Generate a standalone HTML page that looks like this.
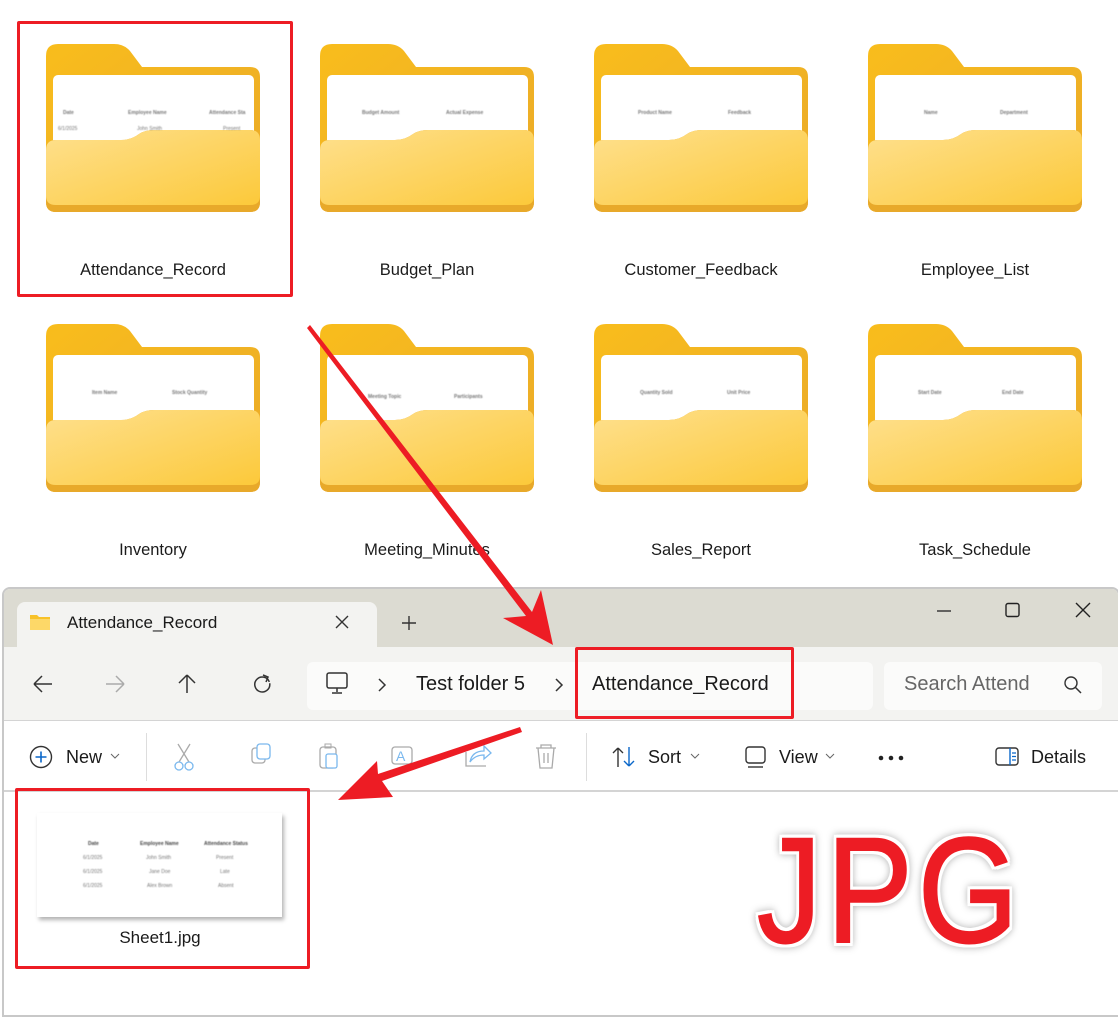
<!DOCTYPE html>
<html><head><meta charset="utf-8"><style>
*{margin:0;padding:0;box-sizing:border-box}
body{width:1118px;height:1006px;overflow:hidden;background:#fff;font-family:"Liberation Sans","DejaVu Sans",sans-serif;position:relative;color:#1a1a1a}
.abs{position:absolute}
.lbl{position:absolute;width:274px;text-align:center;font-size:16.5px;color:#1b1b1b}
.ft{position:absolute;font-size:5px;color:#777;filter:blur(0.4px)}
</style></head><body>
<svg width="0" height="0" style="position:absolute">
<defs>
<linearGradient id="gb" x1="0" y1="0" x2="1" y2="1"><stop offset="0" stop-color="#f9bd1c"/><stop offset="1" stop-color="#e9a92a"/></linearGradient>
<linearGradient id="gf" x1="0" y1="0" x2="1" y2="1"><stop offset="0" stop-color="#fee08e"/><stop offset="1" stop-color="#fcc93a"/></linearGradient>
<linearGradient id="gp" x1="0" y1="0" x2="0" y2="1"><stop offset="0.6" stop-color="#fff"/><stop offset="1" stop-color="#e8e8e8"/></linearGradient>
<symbol id="fold" viewBox="0 0 214 168">
<path d="M12 0 H68 Q78 0 84 7 L96 23 H204 Q214 23 214 33 V158 Q214 168 204 168 H10 Q0 168 0 158 V12 Q0 0 12 0Z" fill="url(#gb)"/>
<rect x="7" y="31" width="201" height="110" rx="5" fill="url(#gp)"/>
<path d="M0 106 Q0 96 10 96 H75 Q85 96 93 90 Q99 86 108 86 H204 Q214 86 214 96 V158 Q214 168 204 168 H10 Q0 168 0 158Z" fill="#e8a92a"/>
<path d="M0 106 Q0 96 10 96 H75 Q85 96 93 90 Q99 86 108 86 H204 Q214 86 214 96 V152 Q214 161 204 161 H10 Q0 161 0 152Z" fill="url(#gf)"/>
</symbol>
</defs></svg>

<svg class="abs" style="left:46px;top:44px" width="214" height="168"><use href="#fold"/></svg>
<svg class="abs" style="left:320px;top:44px" width="214" height="168"><use href="#fold"/></svg>
<svg class="abs" style="left:594px;top:44px" width="214" height="168"><use href="#fold"/></svg>
<svg class="abs" style="left:868px;top:44px" width="214" height="168"><use href="#fold"/></svg>
<svg class="abs" style="left:46px;top:324px" width="214" height="168"><use href="#fold"/></svg>
<svg class="abs" style="left:320px;top:324px" width="214" height="168"><use href="#fold"/></svg>
<svg class="abs" style="left:594px;top:324px" width="214" height="168"><use href="#fold"/></svg>
<svg class="abs" style="left:868px;top:324px" width="214" height="168"><use href="#fold"/></svg>
<div class="ft" style="left:63px;top:110px;font-weight:bold">Date</div>
<div class="ft" style="left:128px;top:110px;font-weight:bold">Employee Name</div>
<div class="ft" style="left:209px;top:110px;font-weight:bold">Attendance Sta</div>
<div class="ft" style="left:58px;top:126px">6/1/2025</div><div class="ft" style="left:137px;top:126px">John Smith</div><div class="ft" style="left:223px;top:126px">Present</div>
<div class="ft" style="left:362px;top:110px;font-weight:bold">Budget Amount</div><div class="ft" style="left:446px;top:110px;font-weight:bold">Actual Expense</div>
<div class="ft" style="left:638px;top:110px;font-weight:bold">Product Name</div><div class="ft" style="left:728px;top:110px;font-weight:bold">Feedback</div>
<div class="ft" style="left:924px;top:110px;font-weight:bold">Name</div><div class="ft" style="left:1000px;top:110px;font-weight:bold">Department</div>
<div class="ft" style="left:92px;top:390px;font-weight:bold">Item Name</div><div class="ft" style="left:172px;top:390px;font-weight:bold">Stock Quantity</div>
<div class="ft" style="left:368px;top:394px;font-weight:bold">Meeting Topic</div><div class="ft" style="left:454px;top:394px;font-weight:bold">Participants</div>
<div class="ft" style="left:640px;top:390px;font-weight:bold">Quantity Sold</div><div class="ft" style="left:727px;top:390px;font-weight:bold">Unit Price</div>
<div class="ft" style="left:918px;top:390px;font-weight:bold">Start Date</div><div class="ft" style="left:1002px;top:390px;font-weight:bold">End Date</div>

<div class="lbl" style="left:16px;top:261px">Attendance_Record</div>
<div class="lbl" style="left:290px;top:261px">Budget_Plan</div>
<div class="lbl" style="left:564px;top:261px">Customer_Feedback</div>
<div class="lbl" style="left:838px;top:261px">Employee_List</div>
<div class="lbl" style="left:16px;top:541px">Inventory</div>
<div class="lbl" style="left:290px;top:541px">Meeting_Minutes</div>
<div class="lbl" style="left:564px;top:541px">Sales_Report</div>
<div class="lbl" style="left:838px;top:541px">Task_Schedule</div>
<div class="abs" style="left:17px;top:21px;width:276px;height:276px;border:3px solid #ed1c24;border-radius:2px"></div>

<div class="abs" style="left:2px;top:587px;width:1118px;height:430px;border:2px solid #c8c8c8;border-radius:8px 8px 0 0;background:#fff;overflow:hidden">
 <div class="abs" style="left:0;top:0;width:1118px;height:58px;background:#dcdbd2"></div>
 <div class="abs" style="left:13px;top:13px;width:360px;height:47px;background:#f3f3f1;border-radius:8px 8px 0 0"></div>
 <div class="abs" style="left:0;top:58px;width:1118px;height:74px;background:#f3f3f1;border-bottom:1px solid #d4d4d4"></div>
 <div class="abs" style="left:303px;top:73px;width:566px;height:48px;background:#fbfbfa;border-radius:6px"></div>
 <div class="abs" style="left:880px;top:73px;width:218px;height:48px;background:#fbfbfa;border-radius:6px"></div>
 <div class="abs" style="left:0;top:201px;width:1118px;height:2px;background:#d4d4d4"></div>
</div>
<svg class="abs" style="left:29px;top:613px" width="22" height="18"><path d="M1 2 H8 L10 4 H21 V17 H1Z" fill="#f8c229"/><path d="M1 6 H21 V17 H1Z" fill="#fdd868"/></svg>
<div class="abs" style="left:67px;top:613px;font-size:17px">Attendance_Record</div>
<svg class="abs" style="left:335px;top:615px" width="14" height="14"><path d="M1 1L13 13M13 1L1 13" stroke="#333" stroke-width="1.4"/></svg>
<svg class="abs" style="left:401px;top:615px" width="16" height="16"><path d="M8 1V15M1 8H15" stroke="#333" stroke-width="1.4"/></svg>
<svg class="abs" style="left:935px;top:601px" width="160" height="20"><path d="M2 10H16" stroke="#222" stroke-width="1.3"/><rect x="71" y="2.5" width="13" height="13" rx="2" fill="none" stroke="#222" stroke-width="1.4"/><path d="M141 2L155 16M155 2L141 16" stroke="#222" stroke-width="1.4"/></svg>
<svg class="abs" style="left:32px;top:672px" width="250" height="24">
<path d="M2 12H20M2 12L10 4M2 12L10 20" stroke="#333" stroke-width="1.5" fill="none"/>
<path d="M74 12H92M92 12L84 4M92 12L84 20" stroke="#aaa" stroke-width="1.5" fill="none"/>
<path d="M155 3V21M155 3L147 11M155 3L163 11" stroke="#333" stroke-width="1.5" fill="none"/>
<path d="M235 5.5A7.5 7.5 0 1 0 236 6.5" stroke="#333" stroke-width="1.5" fill="none" transform="rotate(30 228 12)"/>
<path d="M231 3L236 5L234 10" stroke="#333" stroke-width="1.5" fill="none"/>
</svg>
<svg class="abs" style="left:325px;top:671px" width="24" height="24"><rect x="2" y="2" width="20" height="15" rx="2" fill="none" stroke="#333" stroke-width="1.5"/><path d="M12 17V21M7 22H17" stroke="#333" stroke-width="1.5"/></svg>
<svg class="abs" style="left:377px;top:678px" width="10" height="14"><path d="M2 1L8 7L2 13" stroke="#333" stroke-width="1.5" fill="none"/></svg>
<div class="abs" style="left:416px;top:673px;font-size:20px">Test folder 5</div>
<svg class="abs" style="left:554px;top:678px" width="10" height="14"><path d="M2 1L8 7L2 13" stroke="#333" stroke-width="1.5" fill="none"/></svg>
<div class="abs" style="left:592px;top:673px;font-size:20px">Attendance_Record</div>
<div class="abs" style="left:904px;top:673px;font-size:20px;color:#666">Search Attend</div>
<svg class="abs" style="left:1063px;top:675px" width="20" height="20"><circle cx="8" cy="8" r="6" fill="none" stroke="#333" stroke-width="1.4"/><path d="M12.5 12.5L18 18" stroke="#333" stroke-width="1.5"/></svg>
<div class="abs" style="left:575px;top:647px;width:219px;height:72px;border:3px solid #ed1c24;border-radius:2px"></div>
<svg class="abs" style="left:29px;top:745px" width="24" height="24"><circle cx="12" cy="12" r="10.5" fill="none" stroke="#333" stroke-width="1.4"/><path d="M12 6.5V17.5M6.5 12H17.5" stroke="#0a67c9" stroke-width="1.6"/></svg>
<div class="abs" style="left:66px;top:747px;font-size:18px">New</div>
<svg class="abs" style="left:110px;top:753px" width="10" height="6"><path d="M1 1L5 5L9 1" stroke="#666" fill="none"/></svg>
<div class="abs" style="left:146px;top:733px;width:1px;height:48px;background:#ddd"></div>
<svg class="abs" style="left:170px;top:742px" width="400" height="30">
<path d="M8 2L19 20M20 2L9 20" stroke="#aaa" stroke-width="1.3"/><circle cx="9" cy="24" r="4" fill="none" stroke="#7ab8ee" stroke-width="1.3"/><circle cx="19" cy="24" r="4" fill="none" stroke="#7ab8ee" stroke-width="1.3"/>
<rect x="82" y="6" width="13" height="15" rx="3" fill="none" stroke="#aaa" stroke-width="1.3"/><rect x="87" y="2" width="13" height="15" rx="3" fill="#fff" stroke="#7ab8ee" stroke-width="1.3"/>
<rect x="150" y="5" width="16" height="21" rx="3" fill="none" stroke="#aaa" stroke-width="1.3"/><rect x="155" y="2" width="6" height="4" fill="none" stroke="#aaa"/><rect x="156" y="12" width="11" height="14" rx="2" fill="#fff" stroke="#7ab8ee" stroke-width="1.3"/>
<rect x="222" y="5" width="20" height="17" rx="3" fill="none" stroke="#aaa" stroke-width="1.3"/><text x="226" y="19" font-size="14" fill="#7ab8ee" font-family="Liberation Sans">A</text>
<path d="M296 10V24H316" stroke="#aaa" stroke-width="1.3" fill="none"/><path d="M300 20Q302 9 314 9V4L321 11L314 17V13Q305 13 300 20Z" fill="none" stroke="#7ab8ee" stroke-width="1.3"/>
<path d="M366 6H386M371 6V3H381V6M368 6L370 26H382L384 6M374 11V21M378 11V21" stroke="#aaa" stroke-width="1.3" fill="none"/>
</svg>
<div class="abs" style="left:586px;top:733px;width:1px;height:48px;background:#ddd"></div>
<svg class="abs" style="left:611px;top:745px" width="26" height="24"><path d="M7 22V3M7 3L2 8M7 3L12 8" stroke="#333" stroke-width="1.4" fill="none"/><path d="M18 2V21M18 21L13 16M18 21L23 16" stroke="#0a67c9" stroke-width="1.4" fill="none"/></svg>
<div class="abs" style="left:648px;top:747px;font-size:18px">Sort</div>
<svg class="abs" style="left:690px;top:753px" width="10" height="6"><path d="M1 1L5 5L9 1" stroke="#666" fill="none"/></svg>
<svg class="abs" style="left:744px;top:745px" width="24" height="24"><rect x="2" y="2" width="19" height="16" rx="3" fill="none" stroke="#333" stroke-width="1.4"/><path d="M4 22H19" stroke="#333" stroke-width="1.4"/></svg>
<div class="abs" style="left:779px;top:747px;font-size:18px">View</div>
<svg class="abs" style="left:825px;top:753px" width="10" height="6"><path d="M1 1L5 5L9 1" stroke="#666" fill="none"/></svg>
<svg class="abs" style="left:877px;top:754px" width="28" height="8"><circle cx="4" cy="4" r="2.3" fill="#222"/><circle cx="14" cy="4" r="2.3" fill="#222"/><circle cx="24" cy="4" r="2.3" fill="#222"/></svg>
<svg class="abs" style="left:995px;top:746px" width="26" height="22"><rect x="1" y="2" width="22" height="17" rx="3" fill="none" stroke="#333" stroke-width="1.4"/><path d="M15 2V19" stroke="#0a67c9" stroke-width="1.4"/><path d="M17 7H21M17 10.5H21M17 14H21" stroke="#0a67c9" stroke-width="1.2"/></svg>
<div class="abs" style="left:1031px;top:747px;font-size:18px">Details</div>
<div class="abs" style="left:37px;top:813px;width:245px;height:104px;background:#fff;box-shadow:2px 3px 4px rgba(0,0,0,0.3)"></div>
<div class="ft" style="left:88px;top:841px;font-weight:bold;color:#444">Date</div>
<div class="ft" style="left:140px;top:841px;font-weight:bold;color:#444">Employee Name</div>
<div class="ft" style="left:204px;top:841px;font-weight:bold;color:#444">Attendance Status</div>
<div class="ft" style="left:83px;top:855px">6/1/2025</div><div class="ft" style="left:146px;top:855px">John Smith</div><div class="ft" style="left:216px;top:855px">Present</div>
<div class="ft" style="left:83px;top:869px">6/1/2025</div><div class="ft" style="left:149px;top:869px">Jane Doe</div><div class="ft" style="left:220px;top:869px">Late</div>
<div class="ft" style="left:83px;top:883px">6/1/2025</div><div class="ft" style="left:147px;top:883px">Alex Brown</div><div class="ft" style="left:218px;top:883px">Absent</div>
<div class="abs" style="left:95px;top:928px;width:130px;text-align:center;font-size:17px">Sheet1.jpg</div>
<div class="abs" style="left:15px;top:788px;width:295px;height:181px;border:3px solid #ed1c24;border-radius:2px"></div>
<div class="abs" style="left:757px;top:815px;font-size:150px;line-height:1;letter-spacing:6px;color:#ed1c24;-webkit-text-stroke:2px #ed1c24;filter:drop-shadow(3px 0 0 #fff) drop-shadow(-3px 0 0 #fff) drop-shadow(0 3px 0 #fff) drop-shadow(0 -3px 0 #fff) drop-shadow(0 0 4px rgba(0,0,0,0.3));transform:scaleX(0.86);transform-origin:left top">JPG</div>
<svg class="abs" style="left:0;top:0" width="1118" height="1006">
<path d="M307 328L310 325L532 612L541 590L553 645L503 618L526 616Z" fill="#ed1c24"/>
<path d="M520 727L522 732L382 781L393 797L338 800L377 761L378 774Z" fill="#ed1c24"/>
</svg>
</body></html>
